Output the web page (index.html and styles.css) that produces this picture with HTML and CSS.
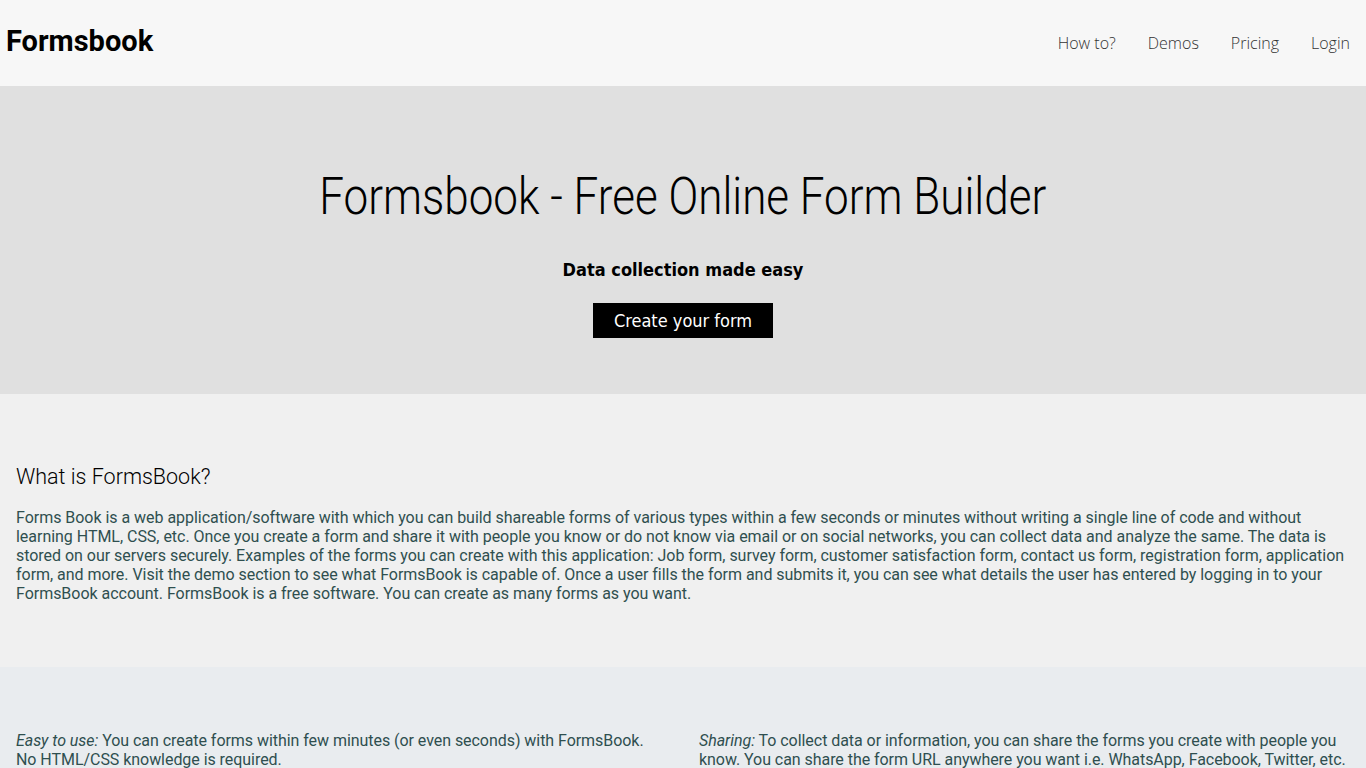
FILE: index.html
```html
<!DOCTYPE html>
<html>
<head>
<meta charset="utf-8">
<title>Formsbook</title>
<link rel="stylesheet" href="styles.css">
</head>
<body>
<header class="topbar">
  <div class="logo">Formsbook</div>
  <nav class="nav">
    <a href="#">How to?</a>
    <a href="#">Demos</a>
    <a href="#">Pricing</a>
    <a href="#">Login</a>
  </nav>
</header>
<section class="hero">
  <h1 class="hero-title">Formsbook - Free Online Form Builder</h1>
  <p class="hero-sub">Data collection made easy</p>
  <a class="hero-btn" href="#">Create your form</a>
</section>
<section class="about">
  <h2 class="about-title">What is FormsBook?</h2>
  <p class="about-text">Forms Book is a web application/software with which you can build shareable forms of various types within a few seconds or minutes without writing a single line of code and without learning HTML, CSS, etc. Once you create a form and share it with people you know or do not know via email or on social networks, you can collect data and analyze the same. The data is stored on our servers securely. Examples of the forms you can create with this application: Job form, survey form, customer satisfaction form, contact us form, registration form, application form, and more. Visit the demo section to see what FormsBook is capable of. Once a user fills the form and submits it, you can see what details the user has entered by logging in to your FormsBook account. FormsBook is a free software. You can create as many forms as you want.</p>
</section>
<section class="features">
  <p class="feature"><em>Easy to use:</em> You can create forms within few minutes (or even seconds) with FormsBook. No HTML/CSS knowledge is required.</p>
  <p class="feature"><em>Sharing:</em> To collect data or information, you can share the forms you create with people you know. You can share the form URL anywhere you want i.e. WhatsApp, Facebook, Twitter, etc.</p>
</section>
</body>
</html>
```
FILE: styles.css
```css
html, body {
  margin: 0;
  padding: 0;
}
body {
  font-family: Roboto, "Liberation Sans", sans-serif;
  background: #e9ecef;
}
.topbar {
  height: 86px;
  background: #f7f7f7;
  display: flex;
  align-items: center;
  justify-content: space-between;
  padding: 0 16px 0 6px;
  box-sizing: border-box;
}
.logo {
  font-family: Roboto, "Liberation Sans", sans-serif;
  font-weight: 700;
  font-size: 29px;
  color: #000;
  margin-top: -4px;
}
.nav {
  display: flex;
  gap: 32px;
}
.nav a {
  font-family: "Open Sans", sans-serif;
  font-weight: 300;
  font-size: 16px;
  color: #333;
  text-decoration: none;
}
.hero {
  background: #e0e0e0;
  height: 308px;
  box-sizing: border-box;
  padding-top: 80px;
  display: flex;
  flex-direction: column;
  align-items: center;
}
.hero-title {
  margin: 0;
  font-family: Roboto, sans-serif;
  font-weight: 300;
  font-size: 52px;
  line-height: 62px;
  color: #000;
  white-space: nowrap;
  transform: scaleX(0.846);
}
.hero-sub {
  margin: 32px 0 0;
  font-family: "DejaVu Sans", sans-serif;
  font-stretch: condensed;
  font-weight: 700;
  font-size: 18px;
  line-height: 19px;
  color: #000;
}
.hero-btn {
  margin-top: 24px;
  width: 180px;
  height: 35px;
  background: #000;
  color: #fff;
  display: flex;
  align-items: center;
  justify-content: center;
  font-family: "DejaVu Sans", sans-serif;
  font-stretch: condensed;
  font-size: 18px;
  text-decoration: none;
}
.about {
  background: #f0f0f0;
  height: 273px;
  box-sizing: border-box;
  padding: 70px 16px 0;
}
.about-title {
  margin: 0;
  font-family: Roboto, sans-serif;
  font-weight: 300;
  font-size: 21.5px;
  line-height: 26px;
  color: #000;
}
.about-text {
  margin: 18px 0 0;
  font-size: 16px;
  line-height: 19px;
  letter-spacing: -0.03px;
  color: #2f4f4f;
}
.features {
  display: grid;
  grid-template-columns: 1fr 1fr;
  column-gap: 32px;
  padding: 64px 16px 40px;
}
.feature {
  margin: 0;
  font-size: 16px;
  line-height: 19px;
  letter-spacing: -0.05px;
  color: #2f4f4f;
}
```
